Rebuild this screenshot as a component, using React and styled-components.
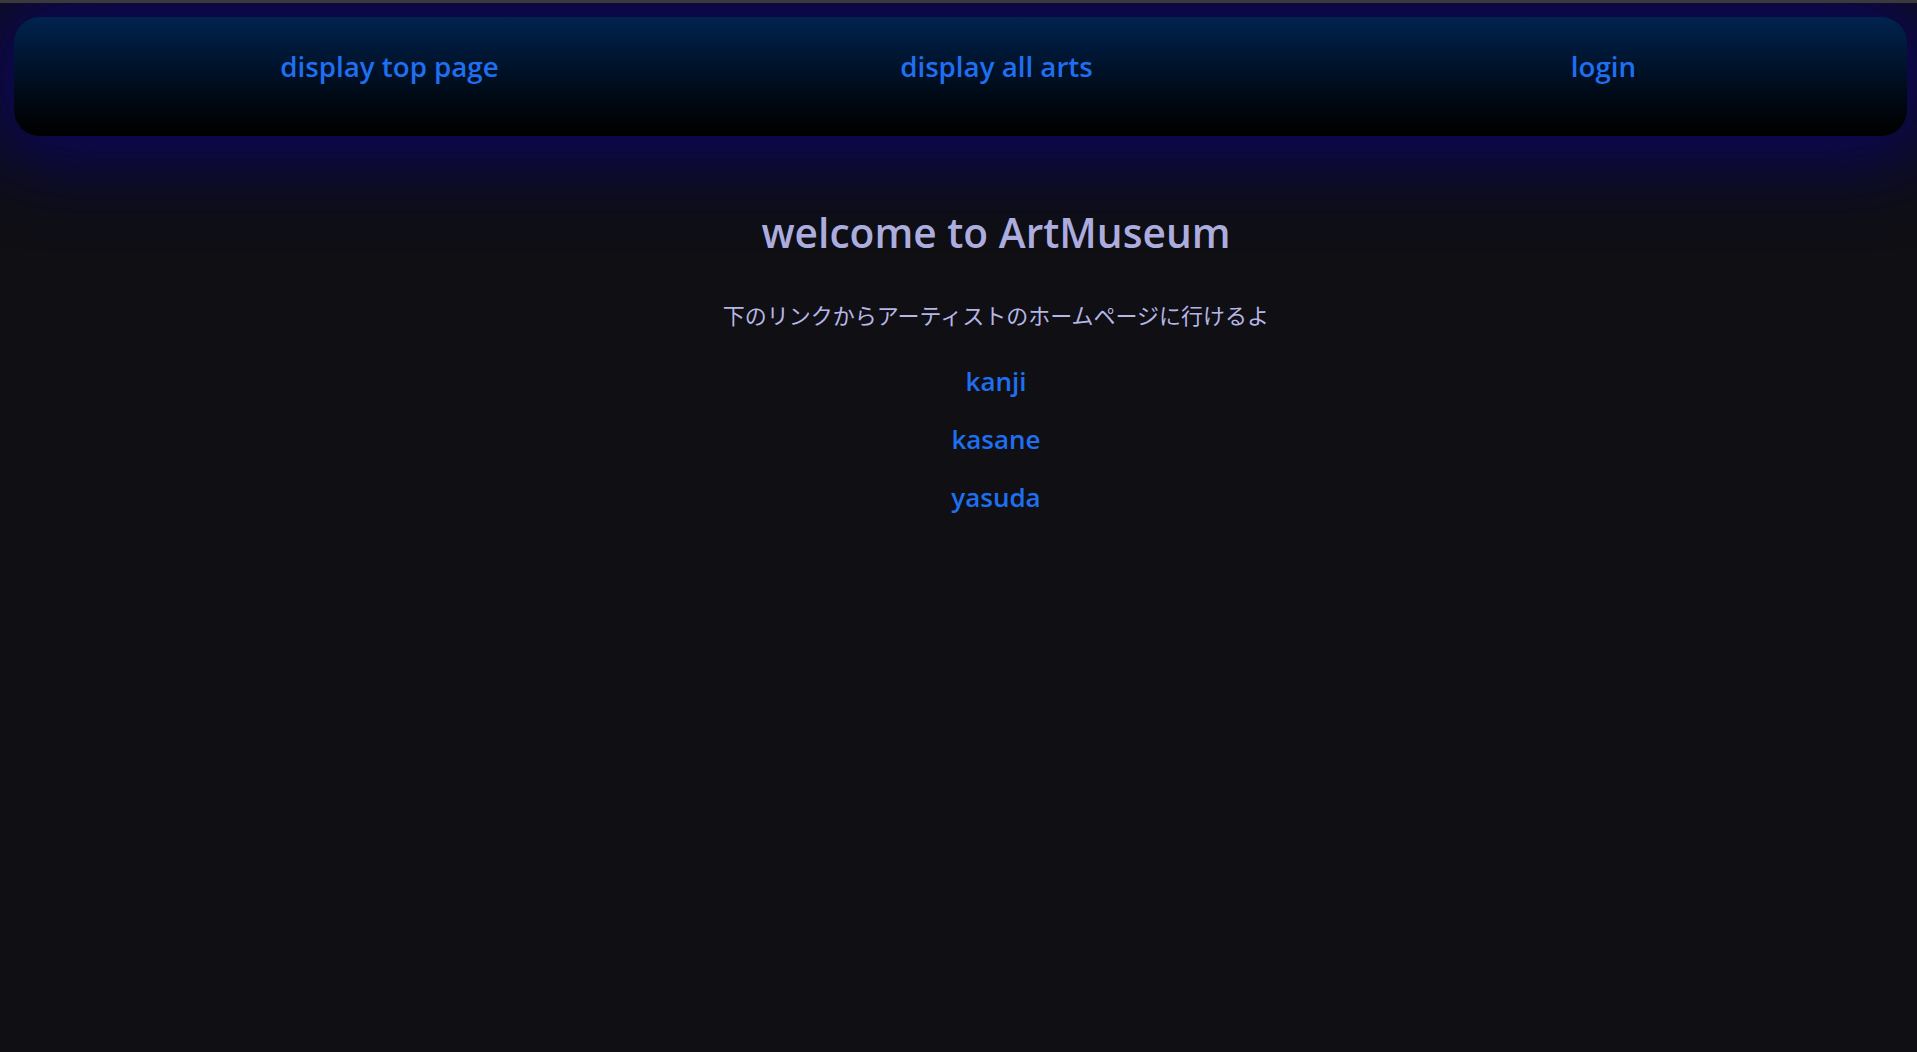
import React from "react";
import styled, { createGlobalStyle } from "styled-components";

const Global = createGlobalStyle`
  html, body {
    margin: 0;
    padding: 0;
    background: #0f0f14;
  }
  body {
    border-top: 3px solid #3a3a3a;
    min-height: 1049px;
    font-family: "Open Sans", "Noto Sans CJK JP", sans-serif;
    overflow: hidden;
  }
`;

const HeaderWrap = styled.header`
  padding: 14px 10px 0 14px;
`;

const Nav = styled.nav`
  height: 119px;
  border-radius: 26px;
  background: linear-gradient(to bottom, #00234f 0%, #000812 70%, #000000 100%);
  box-shadow: 0 0 80px 22px #0b0561;
`;

const NavList = styled.ul`
  display: flex;
  list-style: none;
  margin: 0;
  padding: 31px 0 0 72px;
`;

const NavItem = styled.li`
  flex: 1;
  text-align: center;
`;

const Link = styled.a`
  color: #1f6ff0;
  text-decoration: none;
  font-family: "Open Sans", sans-serif;
  font-weight: 600;
  font-size: ${(p) => p.$size || 26}px;
  line-height: 36px;
`;

const Main = styled.main`
  display: flex;
  flex-direction: column;
  align-items: center;
  padding: 69px 0 0 75px;
`;

const Title = styled.h1`
  margin: 0;
  color: #acacdf;
  font-family: "Open Sans", sans-serif;
  font-weight: 600;
  font-size: 40.7px;
  line-height: 54px;
`;

const Lead = styled.p`
  margin: 40px 0 0;
  color: #b6b6e6;
  font-family: "Noto Sans CJK JP", sans-serif;
  font-weight: 400;
  font-size: 22px;
  line-height: 30px;
`;

const ArtistList = styled.div`
  display: flex;
  flex-direction: column;
  align-items: center;
  gap: 22px;
  margin-top: 34px;
`;

export default function App() {
  return (
    <>
      <Global />
      <HeaderWrap>
        <Nav>
          <NavList>
            <NavItem><Link href="#" $size={27.7}>display top page</Link></NavItem>
            <NavItem><Link href="#" $size={27.7}>display all arts</Link></NavItem>
            <NavItem><Link href="#" $size={27.7}>login</Link></NavItem>
          </NavList>
        </Nav>
      </HeaderWrap>
      <Main>
        <Title>welcome to ArtMuseum</Title>
        <Lead>下のリンクからアーティストのホームページに行けるよ</Lead>
        <ArtistList>
          <Link href="#">kanji</Link>
          <Link href="#">kasane</Link>
          <Link href="#">yasuda</Link>
        </ArtistList>
      </Main>
    </>
  );
}
